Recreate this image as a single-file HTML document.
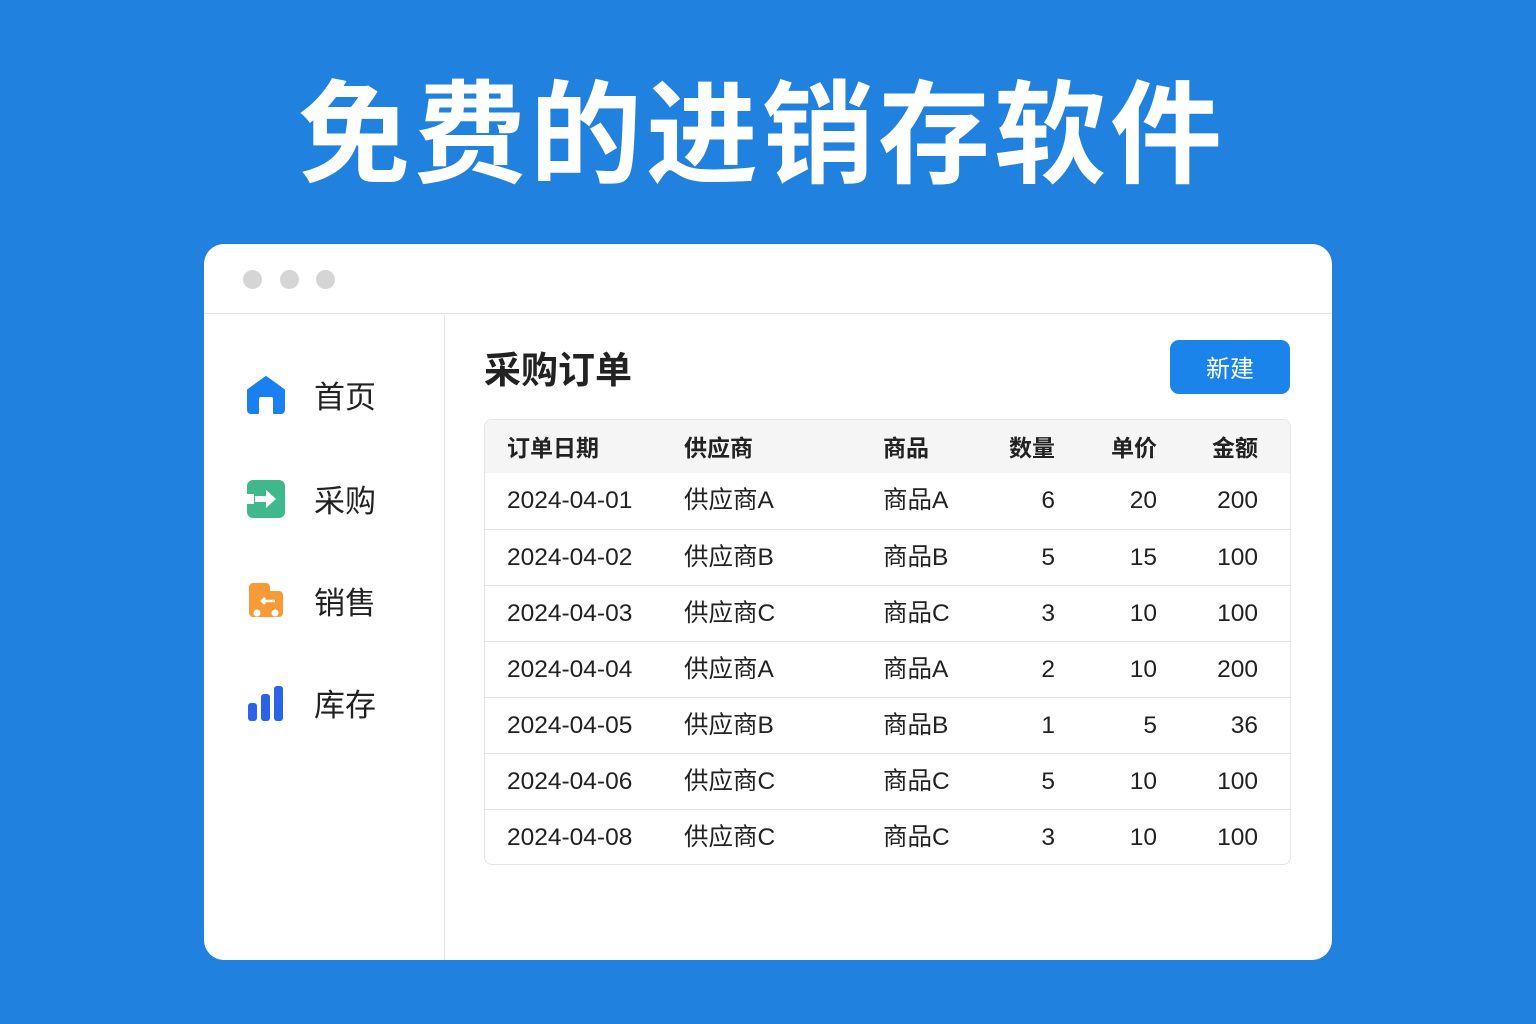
<!DOCTYPE html>
<html><head><meta charset="utf-8"><style>
*{margin:0;padding:0;box-sizing:border-box}
body{width:1536px;height:1024px;background:#2181de;position:relative;overflow:hidden;font-family:"Liberation Sans","Noto Sans CJK SC",sans-serif;color:#222}
.title{position:absolute;top:56px;left:-6px;width:1536px;text-align:center;color:#fff;font-size:112px;font-weight:bold;letter-spacing:4px;line-height:140px;font-family:"Noto Sans CJK SC",sans-serif}
.card{position:absolute;left:204px;top:244px;width:1128px;height:716px;background:#fff;border-radius:20px;overflow:hidden}
.bar{height:70px;border-bottom:1px solid #e3e3e3;position:relative}
.dot{position:absolute;top:26px;width:19px;height:19px;border-radius:50%;background:#d5d5d5}
.side{position:absolute;left:0;top:70px;width:241px;bottom:0;border-right:1px solid #e6e6e6}
.nav{position:absolute;left:42px;display:flex;align-items:center}
.nav span{margin-left:28px;font-size:31px;color:#222;font-family:"Noto Sans CJK SC",sans-serif}
.h{position:absolute;left:280px;top:96px;font-size:37px;font-weight:bold;color:#222;font-family:"Noto Sans CJK SC",sans-serif}
.btn{position:absolute;left:966px;top:96px;width:120px;height:54px;background:#1a84ea;border-radius:9px;color:#fff;font-size:24px;text-align:center;line-height:54px;font-family:"Noto Sans CJK SC",sans-serif}
.tbl{position:absolute;left:280px;top:175px;width:807px;height:446px;border:1px solid #e4e4e4;border-radius:8px;overflow:hidden}
.row{position:absolute;left:0;width:100%;height:56px;border-top:1px solid #e2e2e2;font-size:24.5px;color:#222;font-family:"Liberation Sans","Noto Sans CJK SC",sans-serif}
.row div{position:absolute;top:0;line-height:56px}
.hd{background:#f5f5f5;border-top:none;height:53px;font-weight:bold;font-size:23px;font-family:"Noto Sans CJK SC",sans-serif}
.hd div{line-height:53px}
.c1{left:22px}.c2{left:199px}.c3{left:398px}
.c4{right:235px;text-align:right}.c5{right:133px;text-align:right}.c6{right:32px;text-align:right}
</style></head><body>
<div class="title">免费的进销存软件</div>
<div class="card">
 <div class="bar"><div class="dot" style="left:39px"></div><div class="dot" style="left:76px"></div><div class="dot" style="left:112px"></div></div>
 <div class="side">
  <div class="nav" style="top:58px"><svg width="40" height="40" viewBox="0 0 40 40"><path d="M20 2 L38 15 V35 a3 3 0 0 1 -3 3 H28 V24 a3 3 0 0 0 -3 -3 H15 a3 3 0 0 0 -3 3 V38 H5 a3 3 0 0 1 -3 -3 V15 Z" fill="#1a7ff0" stroke="#1a7ff0" stroke-width="2" stroke-linejoin="round"/></svg><span>首页</span></div>
  <div class="nav" style="top:162px"><svg width="40" height="40" viewBox="0 0 40 40"><rect x="1" y="1" width="38" height="38" rx="6" fill="#3fb98c"/><rect x="0" y="15" width="8" height="10" fill="#fff"/><path d="M9 17 H20 V11 L30 20 L20 29 V23 H9 Z" fill="#fff"/></svg><span>采购</span></div>
  <div class="nav" style="top:264px"><svg width="40" height="40" viewBox="0 0 40 40"><path d="M3 6 a4 4 0 0 1 4 -4 H20 a4 4 0 0 1 4 4 V10 H33 a4 4 0 0 1 4 4 V32 a4 4 0 0 1 -4 4 H7 a4 4 0 0 1 -4 -4 Z" fill="#f79a38"/><circle cx="11" cy="32" r="3.5" fill="#fff"/><circle cx="29" cy="32" r="3.5" fill="#fff"/><path d="M16 20 H29 M19 17 L16 20 L19 23" stroke="#fff" stroke-width="2.5" fill="none"/></svg><span>销售</span></div>
  <div class="nav" style="top:366px"><svg width="40" height="40" viewBox="0 0 40 40"><rect x="2" y="20" width="9" height="18" rx="3" fill="#2a62e8"/><rect x="15" y="11" width="9" height="27" rx="3" fill="#2a62e8"/><rect x="28" y="3" width="9" height="35" rx="3" fill="#2a62e8"/></svg><span>库存</span></div>
 </div>
 <div class="h">采购订单</div>
 <div class="btn">新建</div>
 <div class="tbl">
  <div class="row hd" style="top:0"><div class="c1">订单日期</div><div class="c2">供应商</div><div class="c3">商品</div><div class="c4">数量</div><div class="c5">单价</div><div class="c6">金额</div></div>
  <div class="row" style="top:53px;border-top:none"><div class="c1">2024-04-01</div><div class="c2">供应商A</div><div class="c3">商品A</div><div class="c4">6</div><div class="c5">20</div><div class="c6">200</div></div>
  <div class="row" style="top:109px"><div class="c1">2024-04-02</div><div class="c2">供应商B</div><div class="c3">商品B</div><div class="c4">5</div><div class="c5">15</div><div class="c6">100</div></div>
  <div class="row" style="top:165px"><div class="c1">2024-04-03</div><div class="c2">供应商C</div><div class="c3">商品C</div><div class="c4">3</div><div class="c5">10</div><div class="c6">100</div></div>
  <div class="row" style="top:221px"><div class="c1">2024-04-04</div><div class="c2">供应商A</div><div class="c3">商品A</div><div class="c4">2</div><div class="c5">10</div><div class="c6">200</div></div>
  <div class="row" style="top:277px"><div class="c1">2024-04-05</div><div class="c2">供应商B</div><div class="c3">商品B</div><div class="c4">1</div><div class="c5">5</div><div class="c6">36</div></div>
  <div class="row" style="top:333px"><div class="c1">2024-04-06</div><div class="c2">供应商C</div><div class="c3">商品C</div><div class="c4">5</div><div class="c5">10</div><div class="c6">100</div></div>
  <div class="row" style="top:389px"><div class="c1">2024-04-08</div><div class="c2">供应商C</div><div class="c3">商品C</div><div class="c4">3</div><div class="c5">10</div><div class="c6">100</div></div>
 </div>
</div>
</body></html>
